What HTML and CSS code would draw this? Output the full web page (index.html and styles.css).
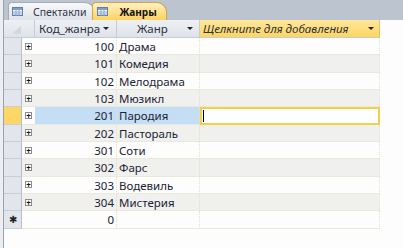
FILE: index.html
```html
<!DOCTYPE html>
<html lang="ru">
<head>
    <meta charset="UTF-8">
    <title>Жанры</title>
    <link rel="stylesheet" href="styles.css">
</head>
<body>

<div class="frame">
    <div class="tabs">
        <div class="tab">
            <svg class="ticon" width="11" height="9" viewBox="0 0 11 9">
                <rect x="0.5" y="0.5" width="10" height="8" fill="#fff" stroke="#5b7fb0"/>
                <rect x="1" y="1" width="9" height="2" fill="#7d9fd0"/>
                <path d="M0.5 5h10M0.5 7h10M4 3v6M7 3v6" stroke="#8aa3c8" stroke-width="1"/>
            </svg>
            <span>Спектакли</span>
        </div>
        <div class="tab active">
            <svg class="ticon" width="11" height="9" viewBox="0 0 11 9">
                <rect x="0.5" y="0.5" width="10" height="8" fill="#fff" stroke="#5b7fb0"/>
                <rect x="1" y="1" width="9" height="2" fill="#7d9fd0"/>
                <path d="M0.5 5h10M0.5 7h10M4 3v6M7 3v6" stroke="#8aa3c8" stroke-width="1"/>
            </svg>
            <span>Жанры</span>
        </div>
    </div>

    <div class="sheet">
        <div class="grid">
            <div class="hd corner"><span class="tri"></span></div>
            <div class="hd code">Код_жанра <i class="arrow"></i></div>
            <div class="hd name"><span class="label">Жанр</span><i class="arrow"></i></div>
            <div class="hd add">Щелкните для добавления <i class="arrow"></i></div>

            <div class="sel"></div><div class="exp"><b>+</b></div><div class="num">100</div><div class="txt">Драма</div><div class="nw"></div>
            <div class="sel alt"></div><div class="exp alt"><b>+</b></div><div class="num alt">101</div><div class="txt alt">Комедия</div><div class="nw alt"></div>
            <div class="sel"></div><div class="exp"><b>+</b></div><div class="num">102</div><div class="txt">Мелодрама</div><div class="nw"></div>
            <div class="sel alt"></div><div class="exp alt"><b>+</b></div><div class="num alt">103</div><div class="txt alt">Мюзикл</div><div class="nw alt"></div>
            <div class="sel cur"></div><div class="exp"><b>+</b></div><div class="num hl">201</div><div class="txt hl">Пародия</div><div class="nw edit"><span class="caret"></span></div>
            <div class="sel alt"></div><div class="exp alt"><b>+</b></div><div class="num alt">202</div><div class="txt alt">Пастораль</div><div class="nw alt"></div>
            <div class="sel"></div><div class="exp"><b>+</b></div><div class="num">301</div><div class="txt">Соти</div><div class="nw"></div>
            <div class="sel alt"></div><div class="exp alt"><b>+</b></div><div class="num alt">302</div><div class="txt alt">Фарс</div><div class="nw alt"></div>
            <div class="sel"></div><div class="exp"><b>+</b></div><div class="num">303</div><div class="txt">Водевиль</div><div class="nw"></div>
            <div class="sel alt"></div><div class="exp alt"><b>+</b></div><div class="num alt">304</div><div class="txt alt">Мистерия</div><div class="nw alt"></div>
            <div class="sel star">✱</div><div class="exp"></div><div class="num">0</div><div class="txt"></div><div class="nw"></div>
        </div>
    </div>
</div>

</body>
</html>
```

FILE: styles.css
```css
body {
    margin: 0;
    font-family: "Noto Sans", Arial, sans-serif;
    font-size: 11.5px;
    color: #1b2333;
    background: #fdfdfd;
}
.frame {
    height: 248px;
    padding-left: 3px;
    background: #eceef1;
}
.tabs {
    height: 20px;
    display: flex;
    align-items: flex-end;
    padding-left: 4px;
    background: #bcc4cf;
    border-left: 1px solid #9aa3ae;
}
.tab {
    height: 17px;
    display: flex;
    align-items: center;
    gap: 10px;
    padding: 0 8px 0 3px;
    margin-right: -3px;
    background: linear-gradient(#f7f8fa, #dfe2e7);
    border: 1px solid #a3acb8;
    border-bottom: none;
    border-radius: 4px 10px 0 0;
    color: #2c3646;
    font-size: 10.5px;
}
.tab.active {
    gap: 11px;
    padding: 0 9px 0 4px;
    background: linear-gradient(#fff1c4, #fdd25e);
    border-color: #d0a447;
    font-weight: bold;
    font-size: 10px;
    color: #111;
    position: relative;
}
.ticon {
    display: block;
}
.sheet {
    height: 228px;
    background: #fdfdfd;
    border-left: 1px solid #9aa3ae;
}
.grid {
    display: grid;
    grid-template-columns: 18px 13px 82px 83px 180px;
    grid-template-rows: 18px repeat(11, 17.33px);
    width: 376px;
}
.hd {
    display: flex;
    align-items: center;
    background: linear-gradient(#eef0f3, #dfe3e9);
    border-right: 1px solid #c6ccd5;
    border-bottom: 1px solid #c6ccd5;
    color: #2a3140;
}
.corner {
    grid-column: span 2;
    position: relative;
}
.tri {
    position: absolute;
    left: 8px;
    top: 6px;
    width: 0;
    height: 0;
    border-left: 9px solid transparent;
    border-bottom: 8px solid #d2d7de;
}
.code {
    padding-left: 4px;
    justify-content: space-between;
    padding-right: 7px;
}
.name {
    justify-content: space-between;
    padding: 0 6px 0 20px;
}
.add {
    background: linear-gradient(#ffe79c, #fdd55f);
    font-style: italic;
    justify-content: space-between;
    padding: 0 5px 0 3px;
    border-right: 1px solid #e6c35a;
}
.arrow {
    width: 0;
    height: 0;
    border-left: 3px solid transparent;
    border-right: 3px solid transparent;
    border-top: 3px solid #222;
}
.sel {
    background: #e2e6ec;
    border-right: 1px solid #b7bec9;
    border-bottom: 1px solid #c8ced7;
}
.sel.cur {
    background: #fcd766;
}
.star {
    display: flex;
    align-items: center;
    justify-content: center;
    font-size: 10px;
    color: #222;
}
.exp, .num, .txt, .nw {
    border-bottom: 1px solid #ebe8dc;
    border-right: 1px dotted #e4e0c8;
    background: #fdfdfd;
}
.alt {
    background: #f0f0ee;
}
.sel.alt {
    background: #e2e6ec;
}
.exp {
    display: flex;
    align-items: center;
    padding-left: 3px;
    border-right: none;
}
.exp b {
    width: 5px;
    height: 5px;
    border: 1px solid #8d8d8d;
    background: #fff;
    font-size: 8px;
    line-height: 5px;
    text-align: center;
    font-weight: bold;
    color: #111;
}
.num {
    text-align: right;
    padding-right: 2px;
    line-height: 17px;
}
.txt {
    padding-left: 2px;
    line-height: 17px;
}
.hl {
    background: #c4def5;
}
.nw.edit {
    border: 2px solid #f3cf4c;
    background: #fff;
    display: flex;
    align-items: center;
    padding-left: 1px;
}
.caret {
    width: 1px;
    height: 12px;
    background: #000;
}
```
